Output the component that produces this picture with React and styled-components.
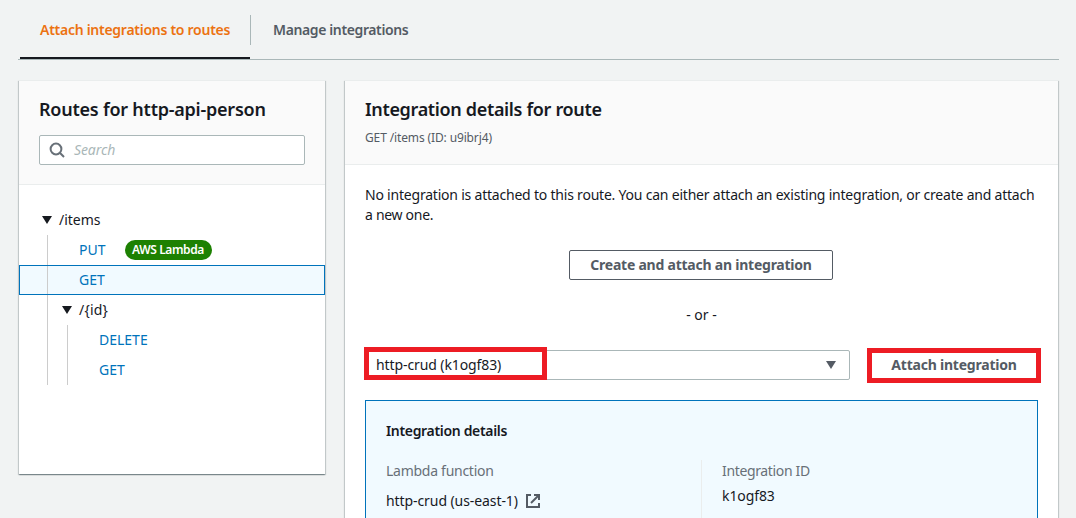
import React from "react";
import styled, { createGlobalStyle, css } from "styled-components";

const GlobalStyle = createGlobalStyle`
  * { box-sizing: border-box; }
  html, body { margin: 0; height: 518px; overflow: hidden; }
  body {
    background: #f1f3f3;
    color: #16191f;
    font: 14px/20px "Noto Sans", "Open Sans", sans-serif;
  }
`;

const tracked = css`
  letter-spacing: ${(p) => p.$track || 0}px;
  white-space: nowrap;
`;

const Page = styled.main`
  height: 518px;
  padding: 0 17px 0 18px;
  overflow: hidden;
`;

const Tabs = styled.nav`
  display: flex;
  height: 60px;
  padding-left: 2px;
  border-bottom: 1px solid #aab7b8;
`;

const Tab = styled.a`
  ${tracked}
  display: flex;
  height: 59px;
  padding: 20px 20px 0;
  font-weight: 600;
  font-size: 14px;
  color: ${(p) => (p.$active ? "#ec7211" : "#545b64")};
  border-bottom: 2px solid ${(p) => (p.$active ? "#16191f" : "transparent")};
  width: ${(p) => p.$width}px;
`;

const TabDivider = styled.span`
  width: 1px;
  height: 30px;
  margin: 15px 2px 0 0;
  background: #aab7b8;
`;

const Columns = styled.div`
  display: flex;
  align-items: flex-start;
  gap: 20px;
  padding: 20px 1px 0;
`;

const Panel = styled.section`
  width: ${(p) => p.$width}px;
  height: ${(p) => p.$height}px;
  background: #fff;
  border-top: 1px solid #eaeded;
  box-shadow: 0 1px 1px 0 rgba(0, 28, 36, 0.3), 1px 1px 1px 0 rgba(0, 28, 36, 0.15),
    -1px 1px 1px 0 rgba(0, 28, 36, 0.15);
`;

const PanelHeader = styled.header`
  height: ${(p) => p.$height}px;
  padding: 17px 20px 0;
  background: #fafafa;
  border-bottom: 1px solid #eaeded;
`;

const Title = styled.h2`
  ${tracked}
  margin: 0;
  font-size: 18px;
  line-height: 22px;
  font-weight: 600;
`;

const Subtitle = styled.p`
  ${tracked}
  margin: 10px 0 0;
  font-size: 12px;
  line-height: 16px;
  color: #545b64;
`;

const SearchBox = styled.div`
  display: flex;
  align-items: center;
  height: 30px;
  margin-top: 15px;
  padding-left: 9px;
  gap: 9px;
  background: #fff;
  border: 1px solid #aab7b8;
  border-radius: 2px;
`;

const Placeholder = styled.span`
  ${tracked}
  font-style: italic;
  color: #aab7b8;
`;

const Tree = styled.div`
  padding-top: 20px;
`;

const TreeRow = styled.div`
  display: flex;
  align-items: center;
  height: 30px;
  padding-left: 28px;
  ${(p) =>
    p.$selected &&
    css`
      background: #f1faff;
      outline: 1px solid #0073bb;
      outline-offset: -1px;
    `}
`;

const Guide = styled.span`
  width: 20px;
  height: 30px;
  border-left: 1px solid #ccc;
`;

const Caret = styled.svg`
  display: block;
  flex: none;
  width: 10px;
  height: 8px;
  fill: ${(p) => p.$color || "#16191f"};
`;

const Branch = styled.span`
  ${tracked}
  display: flex;
  align-items: center;
  gap: 7px;
  margin-left: -5px;
`;

const Method = styled.a`
  ${tracked}
  margin-left: 12px;
  color: #0073bb;
`;

const Badge = styled.span`
  ${tracked}
  display: flex;
  justify-content: center;
  width: 87px;
  height: 20px;
  margin-left: ${(p) => p.$gap}px;
  border-radius: 10px;
  background: #1d8102;
  color: #fff;
  font-size: 12px;
  font-weight: 600;
  line-height: 20px;
`;

const Body = styled.div`
  padding: 20px 20px 0;
`;

const Line = styled.span`
  ${tracked}
  display: block;
`;

const Center = styled.div`
  display: flex;
  justify-content: center;
  margin-top: ${(p) => p.$top}px;
  padding-right: ${(p) => p.$shift || 0}px;
`;

const Button = styled.button`
  width: ${(p) => p.$width}px;
  height: 30px;
  padding: 0;
  font: inherit;
  font-weight: 700;
  letter-spacing: ${(p) => p.$track}px;
  white-space: nowrap;
  color: #545b64;
  background: #fff;
  border: 1px solid #545b64;
  border-radius: 2px;
`;

const AttachRow = styled.div`
  display: flex;
  gap: 20px;
  margin-top: 25px;
`;

const Highlight = styled.div`
  position: relative;
  &::after {
    content: "";
    position: absolute;
    inset: ${(p) => p.$inset};
    border: 5px solid #ed1c24;
  }
`;

const Select = styled.div`
  display: flex;
  align-items: center;
  justify-content: space-between;
  width: 485px;
  height: 30px;
  padding: 0 13px 0 10px;
  border: 1px solid #aab7b8;
  border-radius: 2px;
`;

const Info = styled.div`
  height: 200px;
  margin-top: 20px;
  padding: 20px;
  background: #f1faff;
  border: 1px solid #0073bb;
`;

const InfoTitle = styled.h3`
  ${tracked}
  margin: 0;
  font-size: 14px;
  font-weight: 600;
  line-height: 20px;
`;

const InfoGrid = styled.div`
  display: grid;
  grid-template-columns: 315px 1fr;
  margin-top: 19px;
`;

const Field = styled.div`
  display: flex;
  flex-direction: column;
  gap: ${(p) => p.$gap}px;
  height: 120px;
  padding-top: 1px;
  padding-left: ${(p) => (p.$divided ? 20 : 0)}px;
  border-left: ${(p) => (p.$divided ? "1px solid #eaeded" : "0")};
`;

const Label = styled.span`
  ${tracked}
  color: #687078;
`;

const Value = styled.span`
  ${tracked}
  display: flex;
  align-items: center;
  gap: 8px;
`;

const Text = styled.span`
  ${tracked}
`;

const SearchIcon = () => (
  <svg width="16" height="16" viewBox="0 0 16 16" fill="none" stroke="#687078" strokeWidth="2">
    <circle cx="7" cy="7" r="5.4" />
    <path d="M10.8 10.8 15 15" />
  </svg>
);

const ExternalIcon = () => (
  <svg width="14" height="14" viewBox="0 0 14 14" fill="none" stroke="#545b64" strokeWidth="2">
    <path d="M5 1H1v12h12V9" />
    <path d="M8 1h5v5" />
    <path d="M13 1 5 9" />
  </svg>
);

const Triangle = ({ color }) => (
  <Caret viewBox="0 0 10 8" $color={color}>
    <path d="M0 0h10L5 8z" />
  </Caret>
);

export default function App() {
  return (
    <>
      <GlobalStyle />
      <Page>
        <Tabs>
          <Tab $active $width={230} $track={-0.27}>Attach integrations to routes</Tab>
          <TabDivider />
          <Tab $width={176} $track={-0.38}>Manage integrations</Tab>
        </Tabs>
        <Columns>
          <Panel $width={306} $height={394}>
            <PanelHeader $height={104}>
              <Title $track={-0.23}>Routes for http-api-person</Title>
              <SearchBox>
                <SearchIcon />
                <Placeholder $track={-0.1}>Search</Placeholder>
              </SearchBox>
            </PanelHeader>
            <Tree>
              <TreeRow>
                <Branch><Triangle />/items</Branch>
              </TreeRow>
              <TreeRow>
                <Guide />
                <Method>PUT</Method>
                <Badge $gap={19} $track={-0.4}>AWS Lambda</Badge>
              </TreeRow>
              <TreeRow $selected>
                <Guide />
                <Method>GET</Method>
              </TreeRow>
              <TreeRow>
                <Guide />
                <Branch $track={0.2}><Triangle />{"/{id}"}</Branch>
              </TreeRow>
              <TreeRow>
                <Guide />
                <Guide />
                <Method>DELETE</Method>
              </TreeRow>
              <TreeRow>
                <Guide />
                <Guide />
                <Method>GET</Method>
              </TreeRow>
            </Tree>
          </Panel>
          <Panel $width={713} $height={520}>
            <PanelHeader $height={84}>
              <Title $track={-0.34}>Integration details for route</Title>
              <Subtitle $track={-0.13}>GET /items (ID: u9ibrj4)</Subtitle>
            </PanelHeader>
            <Body>
              <Line $track={-0.211}>No integration is attached to this route. You can either attach an existing integration, or create and attach</Line>
              <Line $track={-0.3}>a new one.</Line>
              <Center $top={25} $shift={1}>
                <Button $width={264} $track={-0.23}>Create and attach an integration</Button>
              </Center>
              <Center $top={25}>
                <Text>- or -</Text>
              </Center>
              <AttachRow>
                <Highlight $inset="-3px 303px 0 -1px">
                  <Select>
                    <Text $track={-0.1}>http-crud (k1ogf83)</Text>
                    <Triangle color="#545b64" />
                  </Select>
                </Highlight>
                <Highlight $inset="-2px -3px -3px -3px">
                  <Button $width={168} $track={-0.22}>Attach integration</Button>
                </Highlight>
              </AttachRow>
              <Info>
                <InfoTitle $track={-0.33}>Integration details</InfoTitle>
                <InfoGrid>
                  <Field $gap={10}>
                    <Label $track={-0.27}>Lambda function</Label>
                    <Value><Text $track={-0.08}>http-crud (us-east-1)</Text><ExternalIcon /></Value>
                  </Field>
                  <Field $gap={5} $divided>
                    <Label $track={-0.35}>Integration ID</Label>
                    <Value $track={-0.1}>k1ogf83</Value>
                  </Field>
                </InfoGrid>
              </Info>
            </Body>
          </Panel>
        </Columns>
      </Page>
    </>
  );
}
